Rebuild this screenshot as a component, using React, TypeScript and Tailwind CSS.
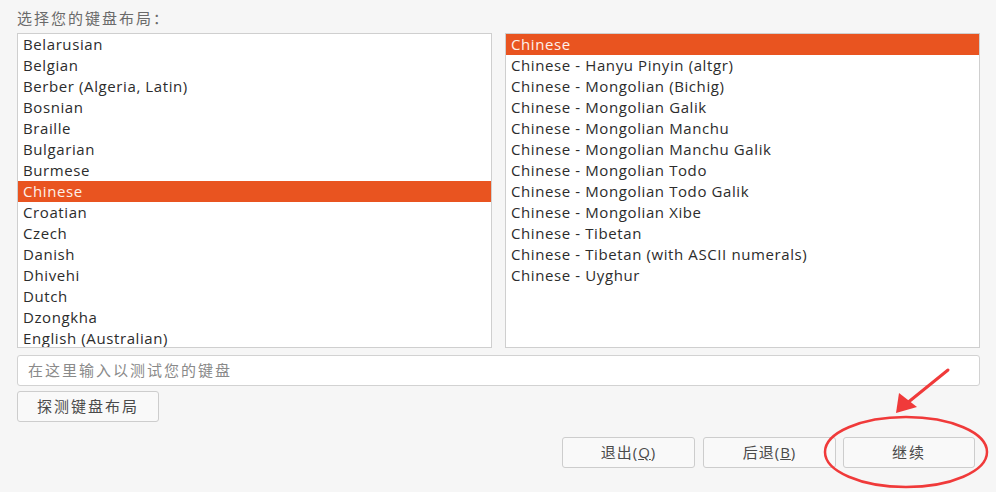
const layouts = [
  'Belarusian',
  'Belgian',
  'Berber (Algeria, Latin)',
  'Bosnian',
  'Braille',
  'Bulgarian',
  'Burmese',
  'Chinese',
  'Croatian',
  'Czech',
  'Danish',
  'Dhivehi',
  'Dutch',
  'Dzongkha',
  'English (Australian)',
];

const variants = [
  'Chinese',
  'Chinese - Hanyu Pinyin (altgr)',
  'Chinese - Mongolian (Bichig)',
  'Chinese - Mongolian Galik',
  'Chinese - Mongolian Manchu',
  'Chinese - Mongolian Manchu Galik',
  'Chinese - Mongolian Todo',
  'Chinese - Mongolian Todo Galik',
  'Chinese - Mongolian Xibe',
  'Chinese - Tibetan',
  'Chinese - Tibetan (with ASCII numerals)',
  'Chinese - Uyghur',
];

function ListBox({ items, selected }: { items: string[]; selected: string }) {
  return (
    <div className="flex-1 h-[315px] bg-white border border-[#cfcfcf] overflow-hidden text-[15px] tracking-[0.6px]">
      {items.map((item) => (
        <div
          key={item}
          className={
            item === selected
              ? 'h-[21px] leading-[21px] px-[5px] bg-[#e95420] text-[#fdf0ea]'
              : 'h-[21px] leading-[21px] px-[5px] text-[#2c2c2c]'
          }
        >
          {item}
        </div>
      ))}
    </div>
  );
}

function Button({ children, className }: { children: React.ReactNode; className: string }) {
  return (
    <button
      className={
        'h-[31px] rounded-[3px] border border-[#cdcdcd] bg-[#f9f9f9] text-[#4a4a4a] text-[15px] ' +
        className
      }
    >
      {children}
    </button>
  );
}

export default function App() {
  return (
    <div
      className="relative w-[996px] h-[492px] bg-[#f6f6f6] overflow-hidden text-[15px]"
      style={{ fontFamily: '"Open Sans", "Noto Sans CJK SC", sans-serif' }}
    >
      <div className="pl-[17px] pr-[16px] pt-[7px]">
        <div className="h-[26px] text-[#6a6a6a] tracking-[2px]">选择您的键盘布局：</div>
        <div className="flex gap-[13px]">
          <ListBox items={layouts} selected="Chinese" />
          <ListBox items={variants} selected="Chinese" />
        </div>
        <div className="mt-[7px] h-[31px] bg-white border border-[#d2d2d2] rounded-[3px] px-[10px] leading-[29px] text-[#8a8a8a] tracking-[2px]">
          在这里输入以测试您的键盘
        </div>
        <div className="mt-[5px]">
          <Button className="w-[142px] tracking-[2px]">探测键盘布局</Button>
        </div>
        <div className="mt-[15px] flex justify-end pr-[5px]">
          <Button className="w-[133px] tracking-[1px]">
            退出(<span className="underline">Q</span>)
          </Button>
          <Button className="ml-[8px] w-[133px] tracking-[1px]">
            后退(<span className="underline">B</span>)
          </Button>
          <Button className="ml-[7px] w-[132px] tracking-[2px]">继续</Button>
        </div>
      </div>

      {/* red annotation */}
      <svg className="absolute left-0 top-0 pointer-events-none" width="996" height="492">
        <ellipse cx="906" cy="452" rx="81" ry="35" fill="none" stroke="#f03a3a" strokeWidth="2.5" />
        <path d="M948 370 L906 404" stroke="#f03a3a" strokeWidth="3" strokeLinecap="round" />
        <polygon points="896,413 899,393 917,407" fill="#f03a3a" />
      </svg>
    </div>
  );
}
